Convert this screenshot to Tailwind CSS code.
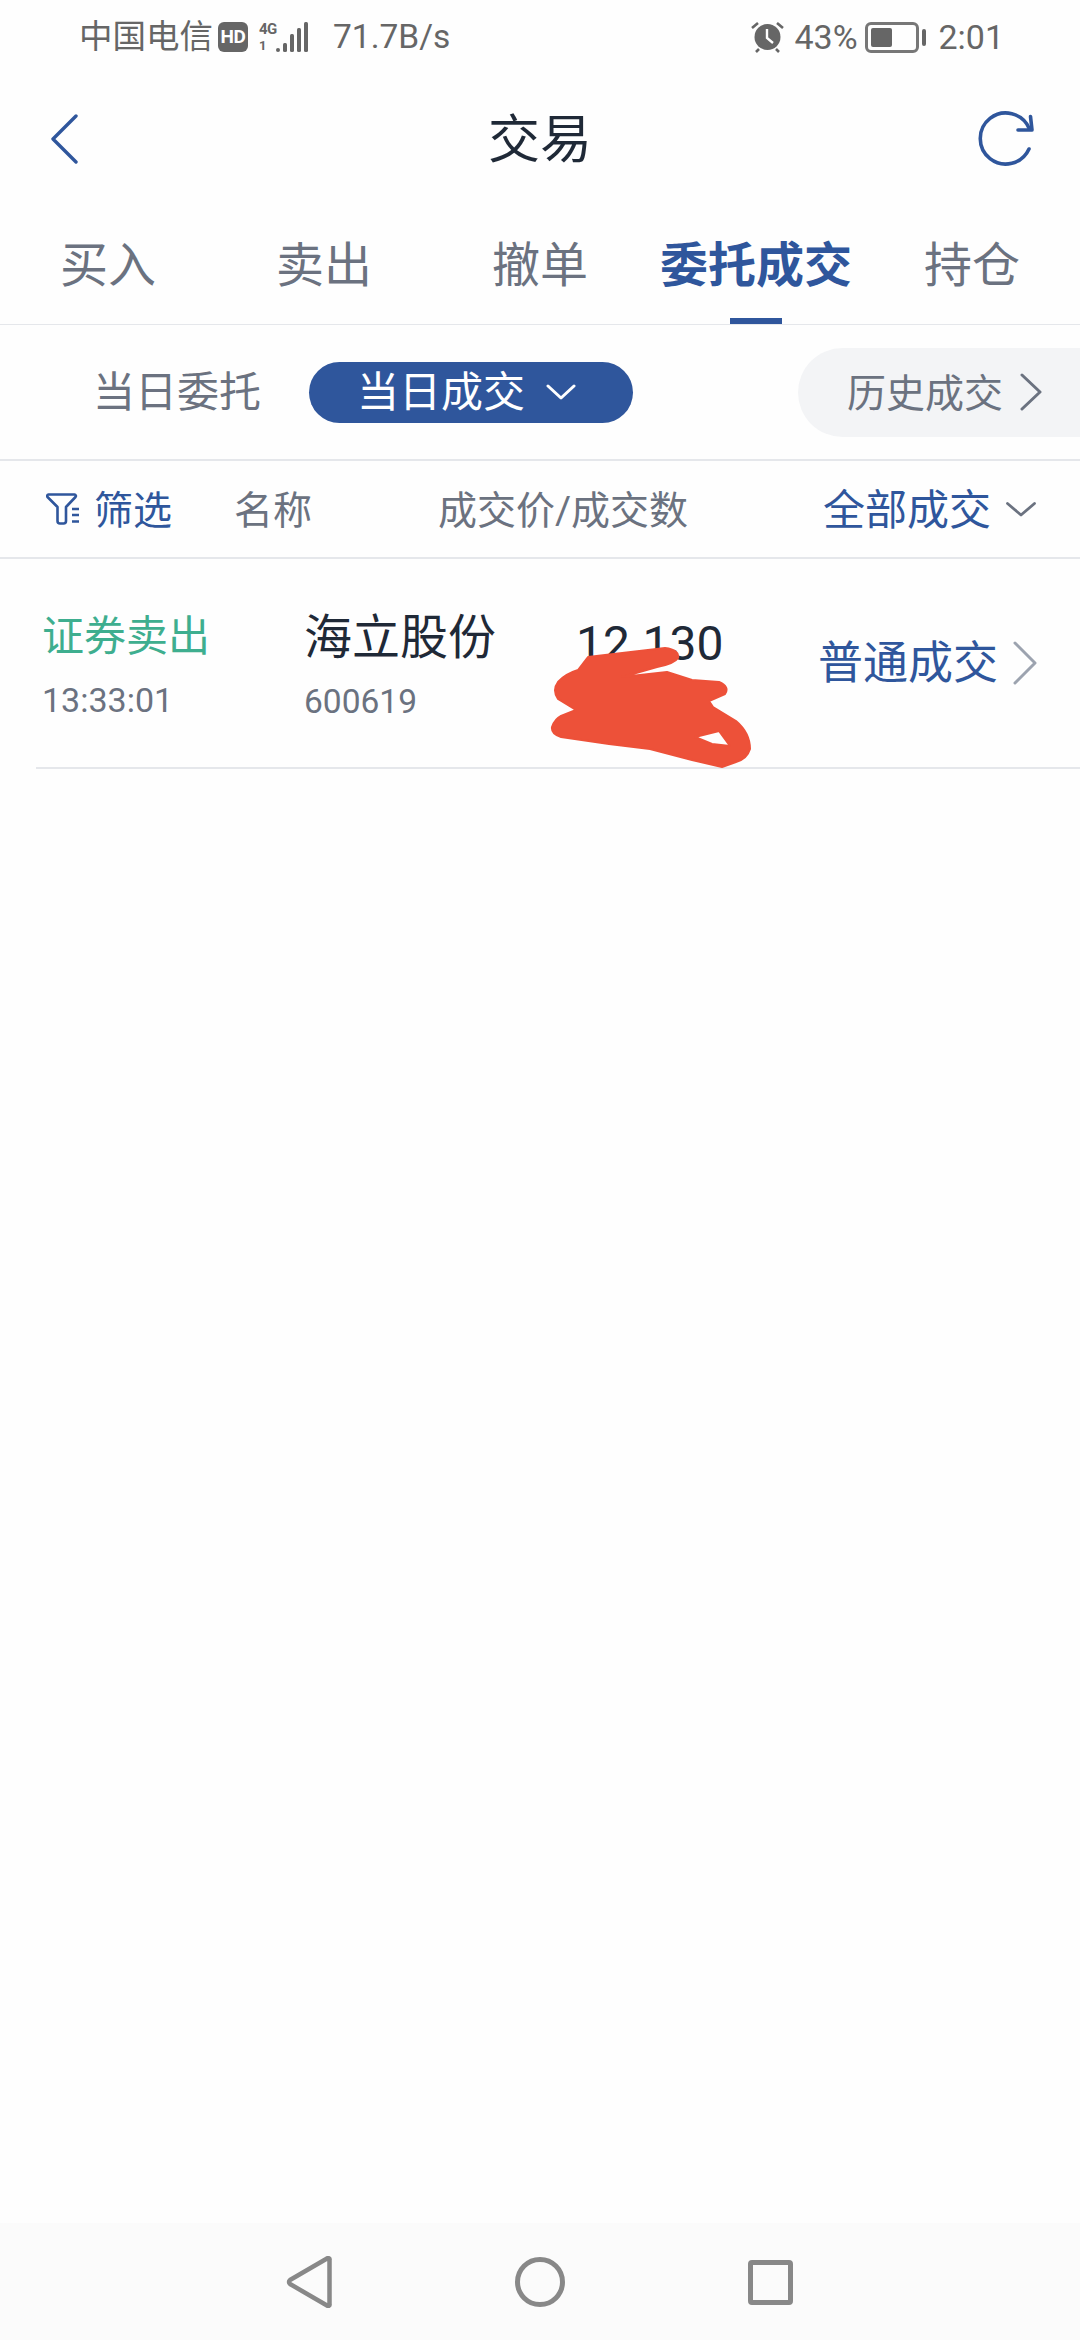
<!DOCTYPE html>
<html lang="zh-CN">
<head>
<meta charset="utf-8">
<script src="https://cdn.jsdelivr.net/npm/@tailwindcss/browser@4"></script>
</head>
<body class="m-0">
<div class="relative w-[1080px] h-[2340px] overflow-hidden bg-[#fefefe] flex flex-col font-['Roboto','Noto_Sans_CJK_SC',sans-serif]">

  <!-- status bar -->
  <div class="h-[74px] flex items-center justify-between pl-[79px] pr-[76px] text-[#666666] shrink-0">
    <div class="flex items-center">
      <span class="text-[33.500px] leading-[40px] whitespace-nowrap">中国电信</span>
      <span class="ml-[5px] w-[30px] h-[30px] rounded-[6px] bg-[#666666] text-white text-[19px] leading-[30px] font-bold text-center tracking-[-0.5px]">HD</span>
      <div class="ml-[11px] w-[17px] h-[30px] flex flex-col justify-between font-bold">
        <span class="text-[15px] leading-[14px] tracking-[-0.5px]">4G</span>
        <span class="text-[13px] leading-[12px]">1</span>
      </div>
      <svg width="32" height="30" viewBox="17 0 32 30">
        <path d="M17 21v9l5-4z" transform="translate(-8 0)" fill="#c4c4c4"/>
        <rect x="17" y="26" width="4" height="4" rx="2" fill="#666"/>
        <rect x="24" y="21" width="4" height="9" rx="1.5" fill="#666"/>
        <rect x="31" y="12" width="4" height="18" rx="1.5" fill="#666"/>
        <rect x="38" y="6" width="4" height="24" rx="1.5" fill="#666"/>
        <rect x="45" y="0" width="4" height="30" rx="1.5" fill="#666"/>
      </svg>
      <span class="ml-[25px] text-[33.500px] leading-[40px]">71.7B/s</span>
    </div>
    <div class="flex items-center">
      <svg width="33" height="32" viewBox="0 0 33 32">
        <circle cx="16.5" cy="16" r="13" fill="#666"/>
        <path d="M16 8v9l6 5" fill="none" stroke="#fff" stroke-width="2.4"/>
        <path d="M1 7l6-5M32 7l-6-5M5 31l3-3M28 31l-3-3" stroke="#666" stroke-width="2.6" fill="none"/>
      </svg>
      <span class="ml-[10px] text-[34px] leading-[40px] w-[63px]">43%</span>
      <div class="ml-[8px] w-[54px] h-[31px] rounded-[6px] border-[3px] border-[#777777] p-[3px] flex">
        <div class="w-[21px] h-full rounded-[2px] bg-[#666666]"></div>
      </div>
      <div class="ml-[3px] w-[4px] h-[17px] rounded-[2px] bg-[#666666]"></div>
      <span class="ml-[12px] text-[34px] leading-[40px]">2:01</span>
    </div>
  </div>

  <!-- header -->
  <div class="h-[130px] grid grid-cols-[1fr_auto_1fr] items-center pl-[51px] pr-[46px] shrink-0">
    <svg width="27" height="50" viewBox="0 0 27 50"><path d="M25 2L2 25l23 23" fill="none" stroke="#2f569c" stroke-width="3.4" stroke-linecap="round" stroke-linejoin="round"/></svg>
    <span class="-ml-[5px] pt-[4px] text-[52px] leading-[60px] text-[#1f2937]">交易</span>
    <svg class="justify-self-end" width="56" height="56" viewBox="0 0 56 56"><path d="M51 38A25.500 25.500 0 1 1 51 17" fill="none" stroke="#2f569c" stroke-width="3.600" stroke-linecap="round"/><path d="M52.500 5.500L54 19H40" fill="none" stroke="#2f569c" stroke-width="3.600" stroke-linecap="round" stroke-linejoin="round"/></svg>
  </div>

  <!-- tabs -->
  <div class="h-[121px] pt-[3px] grid grid-cols-5 items-center border-b border-[#e5e7eb] text-[48px] leading-[56px] text-[#6b7280] text-center shrink-0">
    <span>买入</span>
    <span>卖出</span>
    <span>撤单</span>
    <span class="relative h-full flex items-center justify-center font-bold text-[#2f569c] whitespace-nowrap">委托成交<span class="absolute left-[82px] bottom-0 w-[52px] h-[6px] bg-[#2f569c]"></span></span>
    <span>持仓</span>
  </div>

  <!-- sub tabs -->
  <div class="h-[136px] flex items-center border-b-2 border-[#e5e7eb] shrink-0">
    <span class="ml-[93px] pt-[2px] text-[42px] leading-[50px] text-[#6b7280]">当日委托</span>
    <div class="ml-[48px] w-[324px] h-[61px] rounded-full bg-[#2f569c] flex items-center pl-[48px] text-white text-[42px] leading-[50px]">
      <span class="pt-[2px]">当日成交</span>
      <svg class="ml-[21px]" width="30" height="16" viewBox="0 0 30 16"><path d="M2 2l13 12L28 2" fill="none" stroke="#fff" stroke-width="3" stroke-linecap="round" stroke-linejoin="round"/></svg>
    </div>
    <div class="ml-auto w-[282px] h-[89px] rounded-l-full bg-[#f3f4f6] flex items-center pl-[49px] text-[#6b7280] text-[39px] leading-[50px]">
      <span class="pt-[3px]">历史成交</span>
      <svg class="ml-[17px]" width="22" height="38" viewBox="0 0 22 38"><path d="M2 2l18 17L2 36" fill="none" stroke="#6b7280" stroke-width="3" stroke-linecap="round" stroke-linejoin="round"/></svg>
    </div>
  </div>

  <!-- filter row -->
  <div class="h-[98px] flex items-center border-b-2 border-[#e5e7eb] text-[39px] leading-[48px] text-[#6b7280] shrink-0">
    <svg class="ml-[46px]" width="34" height="32" viewBox="0 0 34 32"><path d="M2.500 1.500h26a1.500 1.500 0 0 1 1 2.500L20 14v14a2.500 2.500 0 0 1-2.500 2.500H14a2.500 2.500 0 0 1-2.500-2.500V14L1.500 4a1.500 1.500 0 0 1 1-2.500z" fill="none" stroke="#2f569c" stroke-width="2.600" stroke-linejoin="round"/><path d="M26 16h7M26 22h7M26 28.500h7" stroke="#2f569c" stroke-width="2.600" fill="none"/></svg>
    <span class="ml-[14px] pt-[3px] text-[#2f569c]">筛选</span>
    <span class="ml-[62px] pt-[3px]">名称</span>
    <span class="ml-[126px] pt-[3px]">成交价/成交数</span>
    <span class="ml-auto pt-[3px] text-[42px] text-[#2f569c]">全部成交</span>
    <svg class="ml-[15px] mr-[44px]" width="30" height="15" viewBox="0 0 30 15"><path d="M1.500 1.500L15 13 28.500 1.500" fill="none" stroke="#6b7280" stroke-width="2.800" stroke-linecap="round" stroke-linejoin="round"/></svg>
  </div>

  <!-- trade row -->
  <div class="ml-[36px] h-[210px] flex border-b-2 border-[#e5e7eb] shrink-0">
    <div class="w-[268px] pl-[6px] pt-[50px]">
      <div class="text-[42px] leading-[56px] text-[#3eae8f]">证券卖出</div>
      <div class="mt-[15px] text-[34px] leading-[40px] text-[#6b7280]">13:33:01</div>
    </div>
    <div class="w-[272px] pt-[51px]">
      <div class="text-[48px] leading-[56px] text-[#1f2937]">海立股份</div>
      <div class="mt-[16px] text-[33.500px] leading-[40px] text-[#6b7280]">600619</div>
    </div>
    <div class="w-[242px] pt-[57px] text-[48px] leading-[56px] text-[#1f2937]">12.130</div>
    <div class="flex items-center h-full">
      <span class="pt-[1px] text-[45px] leading-[56px] text-[#2f569c]">普通成交</span>
      <svg class="ml-[15px]" width="24" height="44" viewBox="0 0 24 44"><path d="M2 2l20 20L2 42" fill="none" stroke="#9ca3af" stroke-width="3" stroke-linecap="round" stroke-linejoin="round"/></svg>
    </div>
  </div>

  <div class="flex-1"></div>

  <!-- nav bar -->
  <div class="h-[117px] bg-[#fbfbfb] grid grid-cols-[231px_231px_231px] justify-center items-center pt-[1px] shrink-0">
    <svg class="justify-self-center" width="46" height="52" viewBox="0 0 46 52"><path d="M41 2.500a1.500 1.500 0 0 1 2.500 1.500v44a1.500 1.500 0 0 1-2.500 1.500L4 28a2.500 2.500 0 0 1 0-4z" fill="none" stroke="#888888" stroke-width="4.500" stroke-linejoin="round"/></svg>
    <div class="justify-self-center w-[50px] h-[50px] rounded-full border-[5px] border-[#888888]"></div>
    <div class="justify-self-center -ml-[2px] w-[45px] h-[45px] rounded-[4px] border-[5px] border-[#888888]"></div>
  </div>

  <!-- scribble over the quantity -->
  <svg class="absolute left-0 top-0 pointer-events-none" width="1080" height="2340" viewBox="0 0 1080 2340">
    <path fill-rule="evenodd" fill="#ed5139" stroke="#ed5139" stroke-width="2" stroke-linejoin="round" d="M588 657L665 648Q680 650 678 658Q674 664 657 667L622 677L667 672L692 680L719 682Q730 687 725 694L709 701L713 707L736 721Q750 733 750 749Q747 759 736 762L722 767L692 760L650 749L609 744L561 737Q551 734 552 727Q555 719 561 716L576 710L558 699Q552 690 558 682Q565 674 578 670ZM695 737L719 731L730 746L712 744Z"/>
  </svg>
</div>
</body>
</html>
